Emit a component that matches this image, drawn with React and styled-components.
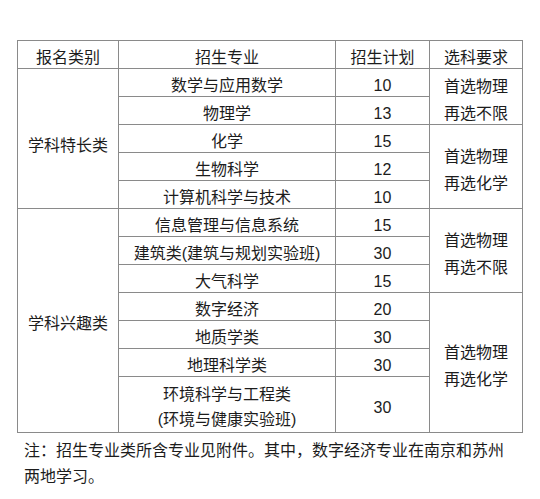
import styled, { createGlobalStyle } from "styled-components";

const GlobalStyle = createGlobalStyle`
  body {
    margin: 0;
    background: #ffffff;
    color: #1c1c1c;
    font-family: "Liberation Sans", "Noto Sans CJK SC", sans-serif;
  }
`;

const Page = styled.div`
  padding: 40px 0 0 17px;
  width: 540px;
  box-sizing: border-box;
`;

const Table = styled.table`
  border-collapse: separate;
  border-spacing: 0;
  border-top: 1px solid #8a8a8a;
  border-left: 1px solid #8a8a8a;
  table-layout: fixed;
  width: 506px;
  font-size: 16px;
`;

const Cell = styled.td`
  border-right: 1px solid #8a8a8a;
  border-bottom: 1px solid #8a8a8a;
  text-align: center;
  vertical-align: middle;
  padding: ${(p) => p.$pad ?? 7}px 0 0;
  white-space: nowrap;
`;

/* $h lets a block be shorter than its lines so that it sits lower in the cell */
const Text = styled.div`
  line-height: ${(p) => p.$lh ?? 20}px;
  height: ${(p) => p.$h ?? (p.$lh ?? 20) * (p.$lines ?? 1)}px;
`;

const Note = styled.p`
  margin: 5px 0 0;
  padding-left: 7px;
  width: 490px;
  font-size: 16px;
  line-height: 26px;
`;

const rows = [
  { name: "数学与应用数学", plan: 10 },
  { name: "物理学", plan: 13 },
  { name: "化学", plan: 15 },
  { name: "生物科学", plan: 12 },
  { name: "计算机科学与技术", plan: 10 },
  { name: "信息管理与信息系统", plan: 15 },
  { name: "建筑类(建筑与规划实验班)", plan: 30 },
  { name: "大气科学", plan: 15 },
  { name: "数字经济", plan: 20 },
  { name: "地质学类", plan: 30 },
  { name: "地理科学类", plan: 30 },
  { name: ["环境科学与工程类", "(环境与健康实验班)"], plan: 30 },
];

const groups = { 0: ["学科特长类", 5, 14], 5: ["学科兴趣类", 7, 6] };
const reqs = {
  0: [["首选物理", "再选不限"], 2],
  2: [["首选物理", "再选化学"], 3],
  5: [["首选物理", "再选不限"], 3],
  8: [["首选物理", "再选化学"], 4],
};

const Lines = ({ items, lh, h }) => (
  <Text $lh={lh} $lines={items.length} $h={h}>
    {items.map((t, i) => (
      <span key={i}>
        {t}
        {i < items.length - 1 && <br />}
      </span>
    ))}
  </Text>
);

export default function App() {
  return (
    <Page>
      <GlobalStyle />
      <Table>
        <colgroup>
          <col style={{ width: 101 }} />
          <col style={{ width: 217 }} />
          <col style={{ width: 94 }} />
          <col style={{ width: 93 }} />
        </colgroup>
        <tbody>
          <tr>
            {["报名类别", "招生专业", "招生计划", "选科要求"].map((h) => (
              <Cell key={h}>
                <Text>{h}</Text>
              </Cell>
            ))}
          </tr>
          {rows.map((r, i) => {
            const names = Array.isArray(r.name) ? r.name : [r.name];
            return (
              <tr key={i}>
                {groups[i] && (
                  <Cell rowSpan={groups[i][1]} $pad={groups[i][2]}>
                    <Text $lh={24}>{groups[i][0]}</Text>
                  </Cell>
                )}
                <Cell $pad={names.length > 1 ? 5 : 7}>
                  <Lines items={names} lh={names.length > 1 ? 25 : 20} />
                </Cell>
                <Cell>
                  <Text>{r.plan}</Text>
                </Cell>
                {reqs[i] && (
                  <Cell rowSpan={reqs[i][1]} $pad={4}>
                    <Lines items={reqs[i][0]} lh={27} h={51} />
                  </Cell>
                )}
              </tr>
            );
          })}
        </tbody>
      </Table>
      <Note>
        注：招生专业类所含专业见附件。其中，数字经济专业在南京和苏州两地学习。
      </Note>
    </Page>
  );
}
